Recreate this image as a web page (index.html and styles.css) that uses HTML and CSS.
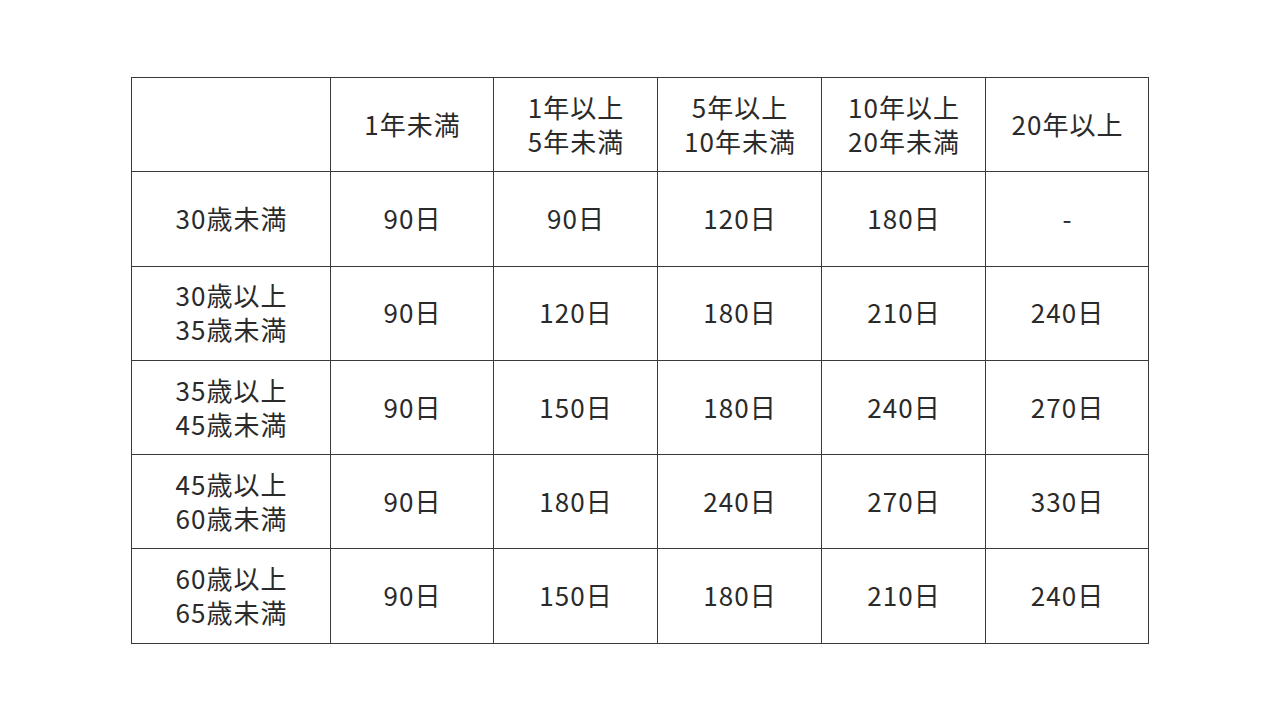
FILE: index.html
```html
<!DOCTYPE html>
<html lang="ja">
<head>
<meta charset="utf-8">
<link rel="stylesheet" href="styles.css">
</head>
<body>
<div class="page">
<table class="grid">
<colgroup>
<col class="c0"><col class="c1"><col class="c2"><col class="c3"><col class="c4"><col class="c5">
</colgroup>
<tr><td></td><td>1年未満</td><td>1年以上<br>5年未満</td><td>5年以上<br>10年未満</td><td>10年以上<br>20年未満</td><td>20年以上</td></tr>
<tr><td>30歳未満</td><td>90日</td><td>90日</td><td>120日</td><td>180日</td><td>-</td></tr>
<tr><td>30歳以上<br>35歳未満</td><td>90日</td><td>120日</td><td>180日</td><td>210日</td><td>240日</td></tr>
<tr><td>35歳以上<br>45歳未満</td><td>90日</td><td>150日</td><td>180日</td><td>240日</td><td>270日</td></tr>
<tr><td>45歳以上<br>60歳未満</td><td>90日</td><td>180日</td><td>240日</td><td>270日</td><td>330日</td></tr>
<tr><td>60歳以上<br>65歳未満</td><td>90日</td><td>150日</td><td>180日</td><td>210日</td><td>240日</td></tr>
</table>
</div>
</body>
</html>
```
FILE: styles.css
```css
html, body {
  margin: 0;
  padding: 0;
  background: #ffffff;
}
.page {
  width: 1280px;
  height: 720px;
  padding-top: 77px;
  padding-left: 131px;
  box-sizing: border-box;
}
.grid {
  border-collapse: collapse;
  table-layout: fixed;
  width: 1017px;
  font-family: "Noto Sans CJK JP", "Noto Sans", sans-serif;
  font-size: 26px;
  line-height: 34px;
  letter-spacing: 1px;
  font-weight: 400;
  color: #2a2a2a;
}
.c0 { width: 199px; }
.c1 { width: 163px; }
.c2 { width: 164px; }
.c3 { width: 164px; }
.c4 { width: 164px; }
.c5 { width: 163px; }
.grid tr { height: 94.3px; }
.grid td {
  border: 1.5px solid #3a3a3a;
  text-align: center;
  vertical-align: middle;
  padding: 0 0 2px 1px;
}
```
